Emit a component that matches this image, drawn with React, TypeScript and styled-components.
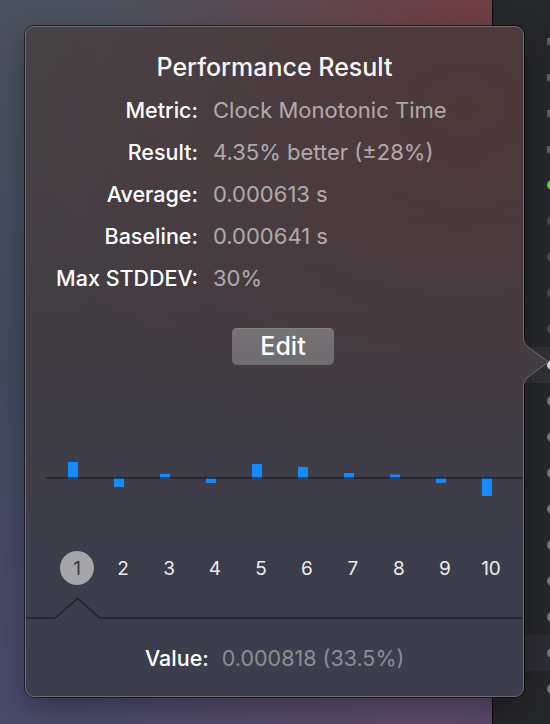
import React from "react";
import styled, { createGlobalStyle } from "styled-components";

const Global = createGlobalStyle`
  html, body { margin: 0; padding: 0; background: #26272b; }
  body {
    font-family: Inter, "Noto Sans", "Liberation Sans", sans-serif;
    -webkit-font-smoothing: antialiased;
  }
`;

const Scene = styled.div`
  position: relative;
  width: 550px;
  height: 724px;
  overflow: hidden;
  display: flex;
`;

const Wallpaper = styled.div`
  width: 492px;
  height: 100%;
  background:
    radial-gradient(110% 55% at 95% 0%, #6f3e41 0%, rgba(111, 62, 65, 0) 70%),
    radial-gradient(90% 45% at 85% 100%, #5e4a6a 0%, rgba(94, 74, 106, 0) 80%),
    linear-gradient(180deg, #4a525e 0%, #3f4a5c 50%, #4a4a6c 100%);
`;

const Divider = styled.div`
  width: 1px;
  height: 100%;
  background: #0b0b0d;
`;

const SidePanel = styled.div`
  flex: 1;
  height: 100%;
  background: #26272b;
  padding-top: 23px;
  display: flex;
  flex-direction: column;
`;

const SideRow = styled.div<{ $tone?: "selected" | "soft" }>`
  height: 36px;
  flex: none;
  display: flex;
  align-items: center;
  justify-content: flex-end;
  background: ${(p) =>
    p.$tone === "selected" ? "#303137" : p.$tone === "soft" ? "#2c2d33" : "transparent"};
`;

const SideMark = styled.span<{ $kind?: "green" | "white" | "dash" | "faint" }>`
  width: 10px;
  height: ${(p) => (p.$kind === "dash" ? "7px" : "10px")};
  margin-right: -7px;
  border-radius: ${(p) => (p.$kind === "dash" ? "1px" : "50%")};
  background: ${(p) =>
    p.$kind === "green"
      ? "#5fcf2a"
      : p.$kind === "white"
      ? "#d8d8da"
      : p.$kind === "faint"
      ? "#4a4b50"
      : p.$kind === "dash"
      ? "#5c5d62"
      : "#76777c"};
`;

const Popover = styled.div`
  position: absolute;
  left: 25px;
  top: 26px;
  width: 499px;
  height: 671px;
  box-sizing: border-box;
  border: 1px solid #6e6b6d;
  border-radius: 9px;
  box-shadow: 0 0 0 1px rgba(0, 0, 0, 0.55), 0 12px 30px rgba(0, 0, 0, 0.3);
  background:
    radial-gradient(95% 55% at 88% 12%, rgba(78, 56, 58, 1) 0%, rgba(78, 56, 58, 0) 100%),
    linear-gradient(180deg, #474346 0%, #423d43 45%, #3c3d4b 80%, #3d3d4e 100%);
  display: flex;
  flex-direction: column;
`;

const Title = styled.div`
  padding-top: 24px;
  font-size: 25px;
  line-height: 32px;
  font-weight: 500;
  color: #f7f7f7;
  text-align: center;
`;

const InfoGrid = styled.div`
  margin-top: 6px;
  display: grid;
  grid-template-columns: 172px auto;
  column-gap: 15px;
  grid-auto-rows: 42px;
  font-size: 22px;
  line-height: 42px;
`;

const Label = styled.div`
  text-align: right;
  font-weight: 500;
  font-size: 21.5px;
  color: #ffffff;
  white-space: nowrap;
`;

const Value = styled.div<{ $dim?: boolean }>`
  color: ${(p) => (p.$dim ? "#8e8d93" : "rgba(255, 255, 255, 0.58)")};
  white-space: nowrap;
`;

const EditButton = styled.button`
  margin: 29px 0 0 206px;
  width: 102px;
  height: 37px;
  padding: 0;
  border: none;
  border-radius: 5px;
  background: linear-gradient(180deg, #757375 0%, #6d6b6e 100%);
  box-shadow: inset 0 1px 0 rgba(255, 255, 255, 0.12);
  color: #ffffff;
  font-family: inherit;
  font-size: 25px;
  font-weight: 500;
  line-height: 37px;
`;

const ChartSvg = styled.svg`
  display: block;
  margin-top: 53px;
  width: 497px;
  height: 120px;
`;

const Runs = styled.div`
  margin-top: 13px;
  padding-left: 28px;
  display: flex;
  height: 34px;
`;

const RunCell = styled.div`
  width: 46px;
  display: flex;
  align-items: center;
  justify-content: center;
`;

const RunNumber = styled.span<{ $active?: boolean }>`
  width: 34px;
  height: 34px;
  border-radius: 50%;
  display: flex;
  align-items: center;
  justify-content: center;
  font-size: 19px;
  color: ${(p) => (p.$active ? "#3a3a3d" : "#ececee")};
  background: ${(p) => (p.$active ? "#a6a5aa" : "transparent")};
`;

const SeparatorSvg = styled.svg`
  display: block;
  margin-top: 12px;
  width: 497px;
  height: 22px;
`;

const ValueRow = styled.div`
  margin-top: 18px;
  padding-left: 119px;
  display: flex;
  gap: 13px;
  font-size: 21.5px;
  line-height: 42px;
`;

const ArrowSvg = styled.svg`
  position: absolute;
  left: 496px;
  top: 305px;
  width: 28px;
  height: 60px;
  overflow: visible;
`;

const bars = [16, -8, 4, -4, 14, 11, 5, 3.5, -4, -17];

const rows: { label: string; value: string }[] = [
  { label: "Metric:", value: "Clock Monotonic Time" },
  { label: "Result:", value: "4.35% better (±28%)" },
  { label: "Average:", value: "0.000613 s" },
  { label: "Baseline:", value: "0.000641 s" },
  { label: "Max STDDEV:", value: "30%" },
];

const sideRows = Array.from({ length: 19 }, (_, i) => i);

const markFor = (i: number) =>
  i === 4 ? "green" : i === 9 ? "white" : i < 4 ? "dash" : i < 9 ? "faint" : undefined;

export default function App() {
  return (
    <>
      <Global />
      <Scene>
        <Wallpaper />
        <Divider />
        <SidePanel>
          {sideRows.map((i) => (
            <SideRow key={i} $tone={i === 9 ? "selected" : i === 17 ? "soft" : undefined}>
              <SideMark $kind={markFor(i)} />
            </SideRow>
          ))}
        </SidePanel>

        <Popover>
          <Title>Performance Result</Title>
          <InfoGrid>
            {rows.map((r) => (
              <React.Fragment key={r.label}>
                <Label>{r.label}</Label>
                <Value>{r.value}</Value>
              </React.Fragment>
            ))}
          </InfoGrid>

          <EditButton>Edit</EditButton>

          <ChartSvg viewBox="0 0 497 120">
            {bars.map((h, i) => {
              const x = 42 + 46 * i;
              return h > 0 ? (
                <rect key={i} x={x} y={60 - h} width={10} height={h + 1} fill="#1689fb" />
              ) : (
                <rect key={i} x={x} y={60} width={10} height={-h + 1} fill="#1689fb" />
              );
            })}
            <line x1={20} y1={60} x2={497} y2={60} stroke="rgba(20,20,24,0.55)" strokeWidth={2} />
          </ChartSvg>

          <Runs>
            {bars.map((_, i) => (
              <RunCell key={i}>
                <RunNumber $active={i === 0}>{i + 1}</RunNumber>
              </RunCell>
            ))}
          </Runs>

          <SeparatorSvg viewBox="0 0 497 22">
            <polyline
              points="0,21 29,21 51.5,1.5 74,21 497,21"
              fill="none"
              stroke="#222226"
              strokeWidth={1.6}
            />
          </SeparatorSvg>

          <ValueRow>
            <Label>Value:</Label>
            <Value $dim>0.000818 (33.5%)</Value>
          </ValueRow>

          <ArrowSvg viewBox="0 0 28 60">
            <path
              d="M-1,0 L1.5,0 L1.5,4 C1.5,10 3,12 6,15 L26.5,30 L6,45 C3,48 1.5,50 1.5,56 L1.5,60 L-1,60 Z"
              fill="#433c42"
            />
            <path
              d="M1.5,0 L1.5,4 C1.5,10 3,12 6,15 L26.5,30 L6,45 C3,48 1.5,50 1.5,56 L1.5,60"
              fill="none"
              stroke="#6e6b6d"
              strokeWidth={1}
            />
          </ArrowSvg>
        </Popover>
      </Scene>
    </>
  );
}
